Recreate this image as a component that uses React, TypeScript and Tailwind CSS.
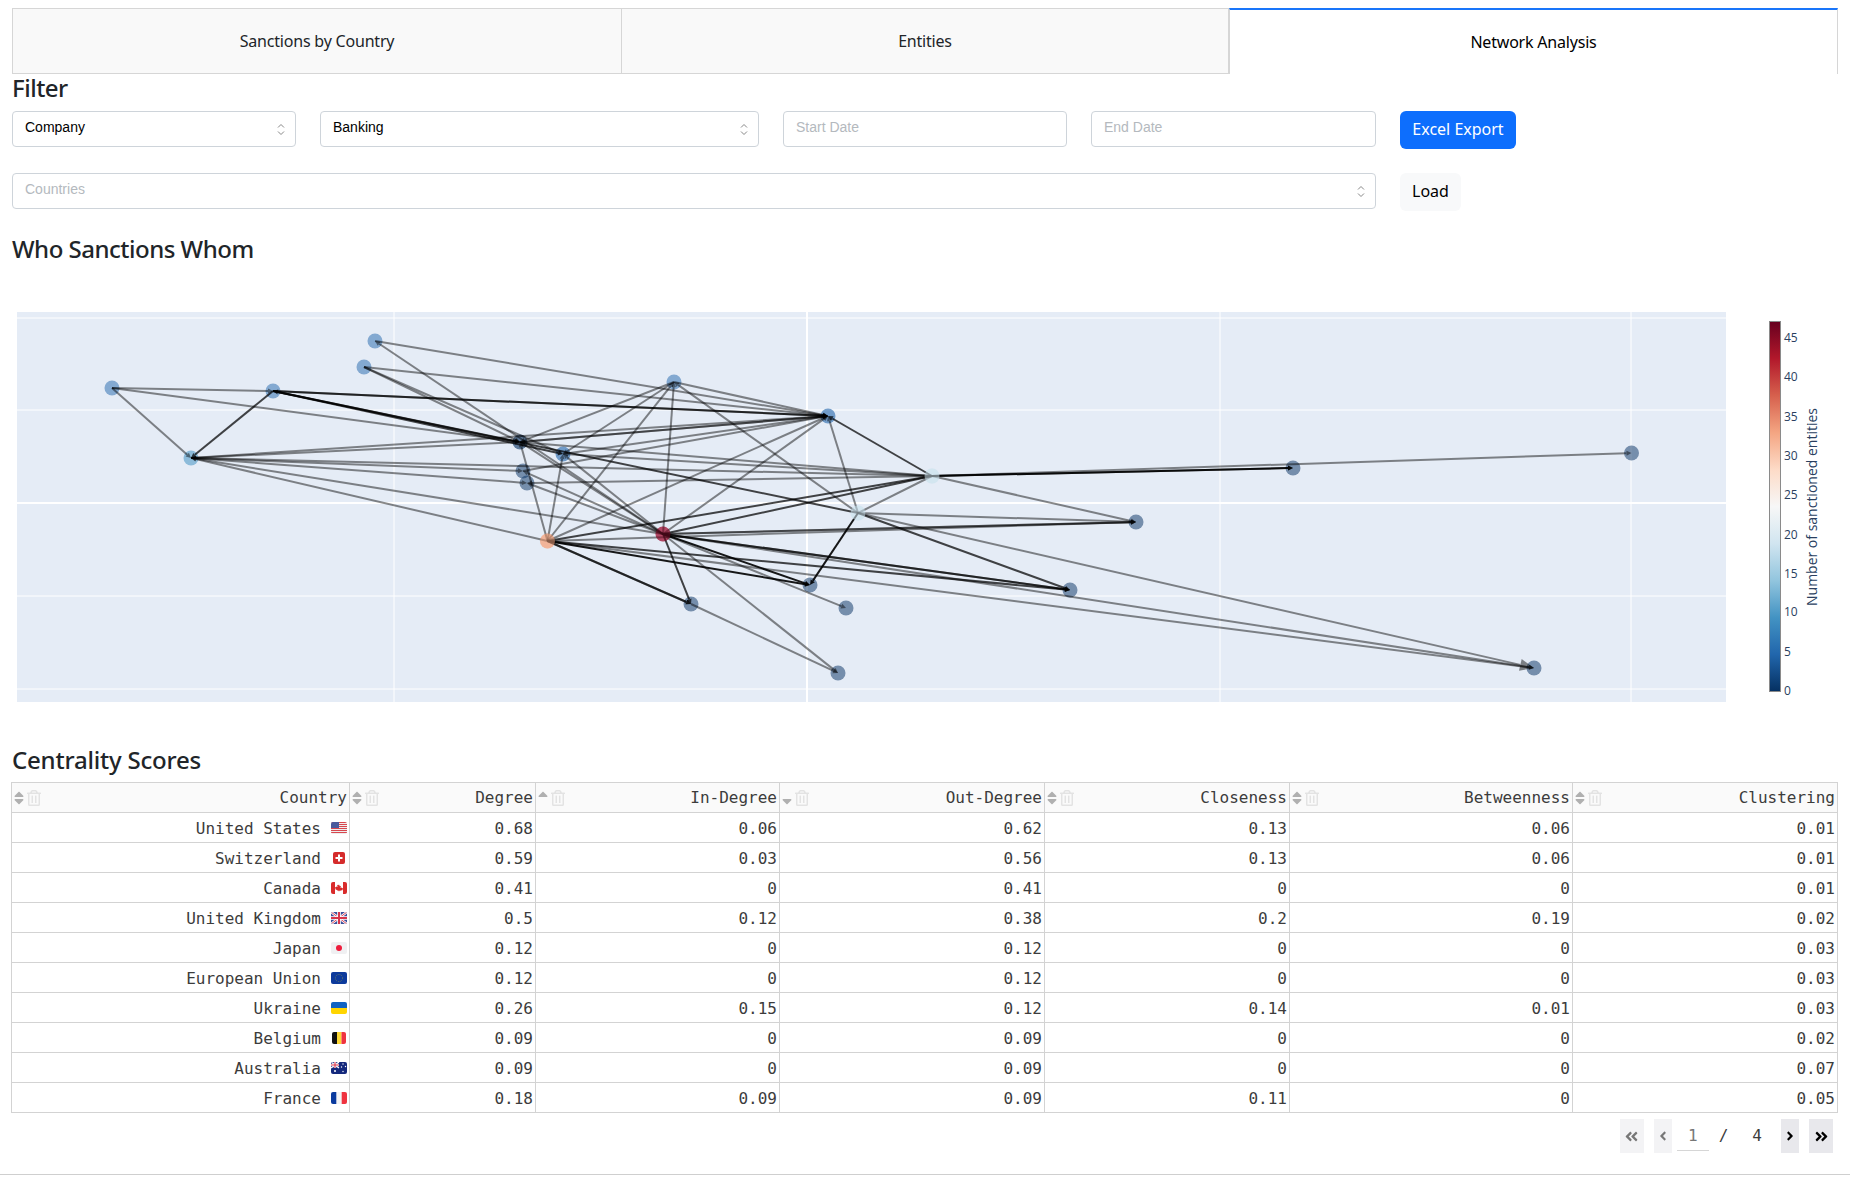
import React from 'react';
import { FaAngleDoubleLeft, FaAngleDoubleRight, FaAngleLeft, FaAngleRight, FaRegTrashAlt, FaSort, FaSortDown, FaSortUp } from 'react-icons/fa';

const NODES: Record<string, [number, number, string, number]> = {
  A: [375, 341, '#2166ac', 0.5], B: [364, 367, '#2166ac', 0.5], C: [112, 388, '#2166ac', 0.5], D: [273, 391, '#2166ac', 0.5],
  E: [191, 458, '#4393c3', 0.55], F: [520, 442, '#053061', 0.6], G: [563, 454, '#2166ac', 0.6], H: [523, 471, '#053061', 0.5],
  I: [527, 483, '#053061', 0.5], J: [547.5, 541, '#f4a582', 0.55], K: [674, 382, '#2166ac', 0.5], L: [828, 416, '#2166ac', 0.6],
  M: [932, 476, '#d1e5f0', 0.9], N: [858, 513, '#d1e5f0', 0.9], O: [663, 534, '#a01437', 0.6], P: [810, 585, '#053061', 0.5],
  Q: [691, 604, '#053061', 0.5], R: [846, 608, '#053061', 0.5], S: [838, 673, '#053061', 0.5], T: [1070, 590, '#053061', 0.5],
  U: [1136, 522, '#053061', 0.5], V: [1293, 468, '#053061', 0.5], W: [1631.5, 453, '#053061', 0.5], X: [1534, 668, '#053061', 0.5],
};

const SENDERS = ['J', 'O', 'M', 'N'];

// from, to, strength (0 plain, 1 dark, 2 black)
const EDGES: [string, string, number][] = [
  ['C', 'D', 0], ['C', 'E', 0], ['C', 'F', 0], ['D', 'E', 1], ['D', 'L', 1], ['D', 'L', 0], ['D', 'F', 1], ['D', 'G', 1], ['D', 'N', 1],
  ['A', 'L', 0], ['A', 'O', 0], ['B', 'L', 0], ['B', 'F', 0], ['B', 'G', 0],
  ['E', 'F', 0], ['E', 'L', 0], ['E', 'H', 0], ['E', 'I', 0], ['E', 'O', 0], ['E', 'J', 0], ['E', 'M', 0],
  ['K', 'L', 0], ['K', 'N', 0], ['K', 'O', 0], ['K', 'J', 0], ['K', 'F', 0], ['K', 'G', 0],
  ['F', 'L', 0], ['F', 'L', 0], ['G', 'L', 0], ['H', 'L', 0], ['J', 'L', 0], ['O', 'L', 0],
  ['F', 'M', 0], ['G', 'M', 0], ['I', 'M', 0], ['H', 'O', 0], ['I', 'O', 0], ['F', 'O', 0], ['G', 'O', 0],
  ['J', 'F', 0], ['J', 'G', 0], ['J', 'M', 1], ['O', 'M', 1], ['N', 'M', 0], ['L', 'M', 1], ['L', 'N', 0],
  ['M', 'V', 2], ['M', 'V', 0], ['M', 'W', 0], ['M', 'U', 0], ['N', 'U', 0], ['O', 'U', 0], ['O', 'U', 0], ['J', 'U', 0],
  ['N', 'T', 1], ['N', 'P', 2], ['N', 'X', 0], ['O', 'T', 1], ['O', 'T', 0], ['J', 'T', 1], ['J', 'P', 2], ['O', 'P', 2],
  ['J', 'Q', 1], ['J', 'Q', 0], ['O', 'Q', 1], ['O', 'R', 0], ['O', 'S', 0], ['Q', 'S', 0], ['O', 'X', 0], ['J', 'X', 0],
];

const TICKS = [[0, 691], [5, 652], [10, 612], [15, 574], [20, 535], [25, 495], [30, 456], [35, 417], [40, 377], [45, 338]];

const RDBU = ['#053061', '#2166ac', '#4393c3', '#92c5de', '#d1e5f0', '#f7f7f7', '#fddbc7', '#f4a582', '#d6604d', '#b2182b', '#67001f'];

const NetworkChart = () => (
  <svg viewBox="12 295 1826 430" width={1826} height={430} className="block mt-8">
    <defs>
      <linearGradient id="rdbu" x1="0" y1="1" x2="0" y2="0">
        {RDBU.map((c, i) => <stop key={c} offset={i / 10} stopColor={c} />)}
      </linearGradient>
    </defs>
    <rect x={17} y={312} width={1709} height={390} fill="#e5ecf6" />
    {[318, 410, 596, 689].map(y => <line key={y} x1={17} x2={1726} y1={y} y2={y} stroke="#fff" strokeWidth={1} />)}
    {[394, 1220, 1631].map(x => <line key={x} x1={x} x2={x} y1={312} y2={702} stroke="#fff" strokeWidth={1} />)}
    <line x1={17} x2={1726} y1={503} y2={503} stroke="#fff" strokeWidth={2} />
    <line x1={807} x2={807} y1={312} y2={702} stroke="#fff" strokeWidth={2} />
    {Object.entries(NODES).map(([k, [x, y, c, o]]) => <circle key={k} cx={x} cy={y} r={7.5} fill={c} opacity={o} />)}
    {EDGES.map(([from, to, s], i) => {
      const flip = SENDERS.includes(to) && !SENDERS.includes(from);
      const a = flip ? to : from;
      const b = flip ? from : to;
      const hasHead = !SENDERS.includes(b);
      const [x1, y1] = NODES[a];
      const [x2, y2] = NODES[b];
      const len = Math.hypot(x2 - x1, y2 - y1);
      const ux = (x2 - x1) / len;
      const uy = (y2 - y1) / len;
      const big = a === 'N' && b === 'X';
      const head = !hasHead ? 0 : big ? 14 : 5;
      const half = big ? 6 : 2.5;
      const bx = x2 - ux * head;
      const by = y2 - uy * head;
      const opacity = s === 2 ? 0.9 : s === 1 ? 0.72 : 0.46;
      return (
        <g key={i} opacity={opacity}>
          <line x1={x1} y1={y1} x2={bx} y2={by} stroke="#000" strokeWidth={2} />
          {hasHead && <polygon points={`${x2},${y2} ${bx - uy * half},${by + ux * half} ${bx + uy * half},${by - ux * half}`} fill="#000" />}
        </g>
      );
    })}
    {SENDERS.map(k => <circle key={k} cx={NODES[k][0]} cy={NODES[k][1]} r={7.5} fill={NODES[k][2]} opacity={k === 'O' ? 0.4 : 0.55} />)}
    <rect x={1769.5} y={321.5} width={11} height={370} fill="url(#rdbu)" stroke="#8a8a8a" strokeWidth={1} />
    <g fontFamily="'Open Sans', sans-serif" fontSize={12} fill="#2a3f5f">
      {TICKS.map(([v, y]) => <text key={v} x={1784} y={y + 4}>{v}</text>)}
      <text transform="translate(1817 507) rotate(-90)" textAnchor="middle" fontSize={14}>Number of sanctioned entities</text>
    </g>
  </svg>
);

const Flag = ({ code }: { code: string }) => {
  const cls = 'block shrink-0 rounded-[2px]';
  switch (code) {
    case 'us':
      return (
        <svg viewBox="0 0 16 12" width={16} height={12} className={cls}>
          <rect width="16" height="12" fill="#eee" />
          {[0, 2, 4, 6, 8, 10].map(y => <rect key={y} y={y} width="16" height="1" fill="#d8474f" />)}
          <rect width="8" height="6" fill="#4a5a9c" />
        </svg>
      );
    case 'ch':
      return (
        <svg viewBox="0 0 12 12" width={12} height={12} className="block shrink-0 rounded-[2px] mx-[2px]">
          <rect width="12" height="12" fill="#d52b2b" />
          <path d="M5 2.5h2V5h2.5v2H7v2.5H5V7H2.5V5H5z" fill="#fff" />
        </svg>
      );
    case 'ca':
      return (
        <svg viewBox="0 0 16 12" width={16} height={12} className={cls}>
          <rect width="16" height="12" fill="#fff" />
          <rect width="4" height="12" fill="#d92b2b" />
          <rect x="12" width="4" height="12" fill="#d92b2b" />
          <path d="M8 2.5l.9 1.7 1-.4-.4 2.2 1.3-.6.3.9 1-.2-.6 1.7.4.3L9 8.8l-.9-.1V10h-.2V8.7l-.9.1-2.9-1.7.4-.3-.6-1.7 1 .2.3-.9 1.3.6-.4-2.2 1 .4z" fill="#d92b2b" />
        </svg>
      );
    case 'gb':
      return (
        <svg viewBox="0 0 16 12" width={16} height={12} className={cls}>
          <rect width="16" height="12" fill="#3b4f9a" />
          <path d="M0 0l16 12M16 0L0 12" stroke="#fff" strokeWidth="2.4" />
          <path d="M0 0l16 12M16 0L0 12" stroke="#d8344a" strokeWidth="0.9" />
          <path d="M8 0v12M0 6h16" stroke="#fff" strokeWidth="3.6" />
          <path d="M8 0v12M0 6h16" stroke="#d8344a" strokeWidth="2" />
        </svg>
      );
    case 'jp':
      return (
        <svg viewBox="0 0 16 12" width={16} height={12} className={cls}>
          <rect width="16" height="12" fill="#f0f0f2" />
          <circle cx="8" cy="6" r="3" fill="#ee1c3c" />
        </svg>
      );
    case 'eu':
      return (
        <svg viewBox="0 0 16 12" width={16} height={12} className={cls}>
          <rect width="16" height="12" fill="#0d3a9c" />
          <circle cx="8" cy="6" r="3.6" fill="none" stroke="#7e8a5a" strokeWidth="0.8" strokeDasharray="0.9 1" />
        </svg>
      );
    case 'ua':
      return (
        <svg viewBox="0 0 16 12" width={16} height={12} className={cls}>
          <rect width="16" height="6" fill="#0f62c2" />
          <rect y="6" width="16" height="6" fill="#ffd500" />
        </svg>
      );
    case 'be':
      return (
        <svg viewBox="0 0 14 12" width={14} height={12} className="block shrink-0 rounded-[2px] mx-[1px]">
          <rect width="5" height="12" fill="#111" />
          <rect x="5" width="4.5" height="12" fill="#fdd835" />
          <rect x="9.5" width="4.5" height="12" fill="#ef3340" />
        </svg>
      );
    case 'au':
      return (
        <svg viewBox="0 0 16 12" width={16} height={12} className={cls}>
          <rect width="16" height="12" fill="#14287c" />
          <rect width="8" height="6" fill="#3b4f9a" />
          <path d="M0 0l8 6M8 0L0 6" stroke="#fff" strokeWidth="1.2" />
          <path d="M4 0v6M0 3h8" stroke="#fff" strokeWidth="2" />
          <path d="M4 0v6M0 3h8" stroke="#d8344a" strokeWidth="1.1" />
          <circle cx="4" cy="9" r="1" fill="#fff" />
          {[[12, 2], [14.5, 4.5], [10.5, 5], [12, 9.5]].map(([x, y]) => <circle key={x} cx={x} cy={y} r="0.7" fill="#fff" />)}
        </svg>
      );
    default:
      return (
        <svg viewBox="0 0 16 12" width={16} height={12} className={cls}>
          <rect width="16" height="12" fill="#f5f5f5" />
          <rect width="5.3" height="12" fill="#0a3a9e" />
          <rect x="10.7" width="5.3" height="12" fill="#ef3340" />
        </svg>
      );
  }
};

const ROWS = [
  { name: 'United States', flag: 'us', vals: ['0.68', '0.06', '0.62', '0.13', '0.06', '0.01'] },
  { name: 'Switzerland', flag: 'ch', vals: ['0.59', '0.03', '0.56', '0.13', '0.06', '0.01'] },
  { name: 'Canada', flag: 'ca', vals: ['0.41', '0', '0.41', '0', '0', '0.01'] },
  { name: 'United Kingdom', flag: 'gb', vals: ['0.5', '0.12', '0.38', '0.2', '0.19', '0.02'] },
  { name: 'Japan', flag: 'jp', vals: ['0.12', '0', '0.12', '0', '0', '0.03'] },
  { name: 'European Union', flag: 'eu', vals: ['0.12', '0', '0.12', '0', '0', '0.03'] },
  { name: 'Ukraine', flag: 'ua', vals: ['0.26', '0.15', '0.12', '0.14', '0.01', '0.03'] },
  { name: 'Belgium', flag: 'be', vals: ['0.09', '0', '0.09', '0', '0', '0.02'] },
  { name: 'Australia', flag: 'au', vals: ['0.09', '0', '0.09', '0', '0', '0.07'] },
  { name: 'France', flag: 'fr', vals: ['0.18', '0.09', '0.09', '0.11', '0', '0.05'] },
];

const COLUMNS: { label: string; width: string; sort: 'none' | 'up' | 'down' }[] = [
  { label: 'Country', width: 'w-[338px]', sort: 'none' },
  { label: 'Degree', width: 'w-[186px]', sort: 'none' },
  { label: 'In-Degree', width: 'w-[244px]', sort: 'up' },
  { label: 'Out-Degree', width: 'w-[265px]', sort: 'down' },
  { label: 'Closeness', width: 'w-[245px]', sort: 'none' },
  { label: 'Betweenness', width: 'w-[283px]', sort: 'none' },
  { label: 'Clustering', width: 'w-[265px]', sort: 'none' },
];

const SelectBox = ({ text, placeholder, className }: { text: string; placeholder?: boolean; className: string }) => (
  <div className={`h-9 flex items-center justify-between pl-3 pr-[10px] bg-white border border-[#ced4da] rounded-[4px] text-sm font-['Liberation_Sans',sans-serif] ${placeholder ? 'text-[#b4b9be]' : 'text-black'} ${className}`}>
    <span className="-mt-1">{text}</span>
    <svg width="8" height="13" viewBox="0 0 8 13" fill="none" stroke="#888" strokeWidth="1">
      <path d="M1 4.5L4 1.5L7 4.5M1 8.5L4 11.5L7 8.5" />
    </svg>
  </div>
);

const DateInput = ({ placeholder, className }: { placeholder: string; className: string }) => (
  <input
    placeholder={placeholder}
    readOnly
    className={`h-9 pl-3 pb-1 bg-white border border-[#ced4da] rounded-[4px] text-sm font-['Liberation_Sans',sans-serif] placeholder:text-[#b4b9be] ${className}`}
  />
);

const PageButton = ({ children, className }: { children: React.ReactNode; className: string }) => (
  <div className={`h-[34px] flex items-center justify-center ${className}`}>{children}</div>
);

export default function App() {
  return (
    <div className="bg-white min-h-[1182px] pt-2 text-[#212529] font-['Noto_Sans',sans-serif] overflow-hidden">
      <div className="px-3">
        <div className="flex h-[66px] text-base tracking-[-0.2px]">
          <div className="w-[610px] flex items-center justify-center bg-[#f9f9f9] border border-[#d6d6d6]">Sanctions by Country</div>
          <div className="w-[607px] flex items-center justify-center bg-[#f9f9f9] border-y border-r border-[#d6d6d6]">Entities</div>
          <div className="w-[609px] flex items-center justify-center bg-white border-t-2 border-t-[#1975fa] border-x border-x-[#d6d6d6] text-black">Network Analysis</div>
        </div>

        <h4 className="-mt-px mb-[9px] text-2xl leading-[29px] font-medium tracking-[-0.5px]">Filter</h4>
        <div className="flex items-start">
          <SelectBox text="Company" className="w-[284px]" />
          <SelectBox text="Banking" className="w-[439px] ml-6" />
          <DateInput placeholder="Start Date" className="w-[284px] ml-6" />
          <DateInput placeholder="End Date" className="w-[285px] ml-6" />
          <button className="w-[116px] h-[38px] ml-6 pb-[2px] bg-[#0d6efd] text-white rounded-md text-base">Excel Export</button>
        </div>
        <div className="flex items-start mt-6">
          <SelectBox text="Countries" placeholder className="w-[1364px]" />
          <button className="w-[61px] h-[38px] ml-6 pb-[2px] bg-[#f8f9fa] text-black rounded-md text-base">Load</button>
        </div>

        <h4 className="mt-[23px] text-2xl leading-[29px] font-medium tracking-[-0.5px]">Who Sanctions Whom</h4>
        <NetworkChart />

        <h4 className="mt-5 mb-2 text-2xl leading-[29px] font-medium tracking-[-0.2px]">Centrality Scores</h4>
        <table className="table-fixed w-[1826px] -ml-px border-collapse font-['DejaVu_Sans_Mono',monospace] text-base text-[#3c3c3c]">
          <colgroup>
            {COLUMNS.map(c => <col key={c.label} className={c.width} />)}
          </colgroup>
          <thead>
            <tr className="h-[30px] bg-[#fafafa]">
              {COLUMNS.map(c => (
                <th key={c.label} className="border border-[#d3d3d3] px-[2px] font-normal">
                  <div className="flex items-center justify-between">
                    <span className="flex items-center gap-[3px]">
                      {c.sort === 'up' && <FaSortUp className="text-[#b0b0b0] w-[10px] h-4" />}
                      {c.sort === 'down' && <FaSortDown className="text-[#b0b0b0] w-[10px] h-4" />}
                      {c.sort === 'none' && <FaSort className="text-[#b0b0b0] w-[10px] h-4" />}
                      <FaRegTrashAlt className="text-[#e3e3e3] w-[14px] h-4" />
                    </span>
                    <span>{c.label}</span>
                  </div>
                </th>
              ))}
            </tr>
          </thead>
          <tbody>
            {ROWS.map(r => (
              <tr key={r.name} className="h-[30px]">
                <td className="border border-[#d3d3d3] px-[2px]">
                  <div className="flex items-center justify-end gap-[10px]">
                    <span className="pt-[2px]">{r.name}</span>
                    <Flag code={r.flag} />
                  </div>
                </td>
                {r.vals.map((v, i) => <td key={i} className="border border-[#d3d3d3] px-[2px] pt-[2px] text-right">{v}</td>)}
              </tr>
            ))}
          </tbody>
        </table>

        <div className="flex justify-end items-center mt-[6px] pr-[5px] font-['DejaVu_Sans_Mono',monospace] text-base text-[#3c3c3c]">
          <PageButton className="w-6 bg-[#f3f3f5] text-[#777]"><FaAngleDoubleLeft size={15} /></PageButton>
          <PageButton className="w-[18px] ml-[10px] bg-[#f3f3f5] text-[#777]"><FaAngleLeft size={14} /></PageButton>
          <div className="w-8 ml-[5px] h-[30px] flex items-center justify-center border-b border-[#d6d6d6] text-[#777]">1</div>
          <span className="ml-[10px]">/</span>
          <span className="ml-6">4</span>
          <PageButton className="w-[18px] ml-[19px] bg-[#e8e8ec] text-black"><FaAngleRight size={14} /></PageButton>
          <PageButton className="w-6 ml-[10px] bg-[#e8e8ec] text-black"><FaAngleDoubleRight size={15} /></PageButton>
        </div>
      </div>
      <div className="mt-[21px] border-t border-[#cfcfcf]" />
    </div>
  );
}
